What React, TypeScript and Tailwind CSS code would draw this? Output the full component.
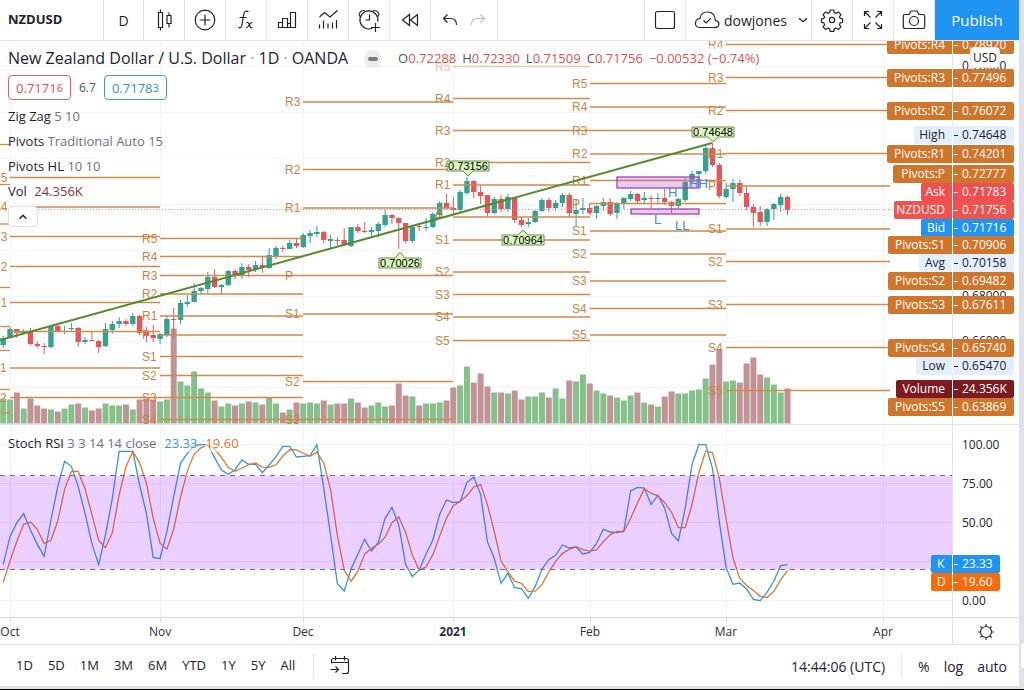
import type { ReactNode } from 'react';

type Candle = [high: number, top: number, bottom: number, low: number, volume: number, up: 0 | 1];

// y positions of wick and body, then volume height
const candles: Candle[] = [
  [336, 338, 345, 348, 25, 1], [327, 329, 338, 338, 24, 1], [329, 329, 333, 338, 31, 0], [329, 331, 333, 334, 15, 1],
  [328, 331, 344, 345, 25, 0], [341, 344, 346, 348, 18, 0], [343, 346, 347, 354, 15, 0], [325, 326, 347, 348, 14, 1],
  [324, 326, 332, 332, 12, 0], [326, 331, 332, 334, 15, 1], [323, 328, 329, 332, 19, 1], [327, 328, 342, 347, 20, 0],
  [337, 340, 342, 344, 16, 1], [331, 340, 341, 341, 13, 0], [340, 341, 347, 353, 15, 0], [323, 329, 346, 347, 20, 1],
  [321, 324, 330, 334, 18, 1], [317, 321, 324, 328, 18, 1], [319, 321, 324, 326, 19, 0], [313, 316, 324, 326, 14, 1],
  [315, 316, 333, 335, 24, 0], [327, 331, 336, 342, 25, 0], [325, 335, 338, 342, 24, 0], [333, 334, 339, 344, 22, 1],
  [315, 319, 335, 337, 24, 1], [308, 319, 320, 337, 95, 0], [300, 303, 320, 324, 42, 1], [295, 302, 304, 307, 38, 1],
  [283, 291, 302, 302, 52, 1], [287, 288, 291, 294, 35, 1], [272, 277, 289, 293, 31, 1], [269, 277, 287, 288, 23, 0],
  [284, 285, 287, 294, 17, 1], [270, 271, 285, 286, 20, 1], [269, 271, 275, 279, 18, 0], [263, 267, 276, 279, 20, 1],
  [264, 267, 270, 277, 22, 0], [261, 265, 269, 272, 21, 1], [257, 265, 267, 273, 19, 0], [248, 255, 268, 269, 26, 1],
  [246, 248, 256, 259, 20, 1], [246, 248, 249, 252, 11, 0], [240, 243, 249, 249, 14, 1], [238, 243, 246, 248, 21, 0],
  [233, 235, 247, 248, 20, 1], [230, 233, 236, 243, 21, 1], [226, 232, 234, 237, 20, 1], [231, 232, 240, 243, 23, 0],
  [235, 239, 241, 248, 19, 1], [237, 240, 241, 245, 20, 0], [228, 240, 245, 246, 20, 0], [227, 227, 246, 247, 25, 1],
  [224, 227, 231, 233, 21, 0], [222, 231, 232, 233, 16, 0], [227, 230, 232, 236, 18, 1], [222, 224, 231, 237, 21, 1],
  [210, 215, 225, 227, 17, 1], [214, 215, 218, 224, 18, 0], [217, 218, 223, 249, 40, 0], [223, 223, 241, 243, 28, 0],
  [227, 227, 241, 243, 27, 1], [223, 226, 227, 231, 18, 0], [218, 227, 228, 231, 20, 1], [212, 214, 227, 228, 20, 1],
  [201, 203, 215, 217, 21, 1], [194, 203, 208, 209, 23, 0], [197, 208, 210, 214, 36, 0], [190, 192, 210, 213, 38, 1],
  [177, 181, 193, 195, 57, 1], [180, 181, 192, 198, 41, 0], [186, 192, 196, 204, 50, 0], [195, 195, 213, 217, 37, 0],
  [197, 199, 213, 214, 31, 1], [195, 199, 209, 212, 31, 0], [194, 197, 209, 212, 30, 1], [197, 198, 220, 223, 33, 0],
  [217, 220, 225, 227, 24, 0], [218, 222, 224, 227, 27, 1], [210, 211, 222, 223, 27, 1], [198, 200, 211, 212, 31, 1],
  [198, 200, 208, 212, 26, 0], [200, 203, 208, 211, 35, 1], [193, 195, 203, 207, 25, 1], [193, 195, 213, 217, 43, 0],
  [200, 210, 214, 226, 42, 1], [198, 208, 210, 214, 49, 1], [203, 208, 213, 215, 40, 0], [205, 206, 213, 219, 33, 1],
  [198, 202, 206, 211, 30, 1], [198, 202, 214, 216, 28, 0], [202, 204, 213, 219, 26, 1], [197, 198, 204, 209, 23, 1],
  [191, 194, 199, 201, 28, 1], [193, 194, 201, 203, 31, 0], [192, 198, 200, 203, 21, 1], [195, 198, 199, 208, 19, 0],
  [193, 198, 199, 203, 17, 1], [189, 198, 202, 205, 27, 0], [201, 202, 206, 213, 32, 0], [198, 199, 206, 208, 30, 1],
  [178, 182, 200, 202, 30, 1], [171, 174, 182, 184, 33, 1], [171, 171, 174, 187, 34, 1], [145, 148, 171, 174, 45, 1],
  [143, 148, 165, 167, 59, 0], [163, 165, 196, 198, 74, 0], [183, 189, 197, 198, 42, 1], [179, 183, 189, 202, 43, 1],
  [180, 183, 193, 196, 41, 0], [187, 193, 207, 210, 60, 0], [204, 207, 213, 227, 66, 0], [206, 212, 222, 226, 49, 0],
  [208, 209, 222, 226, 46, 1], [203, 204, 209, 220, 39, 1], [194, 197, 205, 212, 31, 1], [196, 197, 210, 215, 35, 0],
];

const barX = (i: number) => 3.2 + 6.82 * i;

const months = [
  { label: 'Oct', x: 10 },
  { label: 'Nov', x: 160 },
  { label: 'Dec', x: 303 },
  { label: '2021', x: 453, bold: true },
  { label: 'Feb', x: 590 },
  { label: 'Mar', x: 726 },
  { label: 'Apr', x: 883 },
];

type PivotSet = { from: number; to: number; levels: [string, number][] };

const pivotSets: PivotSet[] = [
  { from: 0, to: 10, levels: [['', 144.5], ['', 184.5], ['', 224], ['', 287.5], ['', 326.5], ['', 350.5], ['', 389.5], ['', 413]] },
  { from: 10, to: 160, levels: [['R5', 177.5], ['R4', 207], ['R3', 236.5], ['R2', 266.5], ['R1', 302.5], ['P', 331.5], ['S1', 368], ['S2', 397.5]] },
  { from: 160, to: 303, levels: [['R5', 238.5], ['R4', 256.5], ['R3', 275.5], ['R2', 294], ['R1', 316], ['P', 335], ['S1', 356.5], ['S2', 375.5], ['S3', 397.5], ['S4', 419.5]] },
  { from: 303, to: 453, levels: [['R3', 102], ['R2', 169.5], ['R1', 208], ['P', 275.5], ['S1', 314], ['S2', 381.5], ['S3', 419.5]] },
  { from: 453, to: 590, levels: [['R5', 66.5], ['R4', 98.5], ['R3', 130.5], ['R2', 162.5], ['R1', 185], ['P', 217], ['S1', 240], ['S2', 272], ['S3', 294.5], ['S4', 317], ['S5', 340.5]] },
  { from: 590, to: 726, levels: [['R5', 83.5], ['R4', 107], ['R3', 130.5], ['R2', 154], ['R1', 180.5], ['P', 203.5], ['S1', 231], ['S2', 254], ['S3', 281], ['S4', 308.5], ['S5', 335]] },
  { from: 726, to: 890, levels: [['R4', 44.5], ['R3', 77.5], ['R2', 110.5], ['R1', 153.5], ['P', 186], ['S1', 229], ['S2', 261.5], ['S3', 304.5], ['S4', 347.5], ['S5', 390.5]] },
];

const ORANGE = '#cf762c';
const PALE = '#e3effd';

const tags = [
  { name: 'Pivots:R4', value: '0.78920', y: 45, x: 887, fill: ORANGE },
  { name: 'Pivots:R3', value: '0.77496', y: 78, x: 887, fill: ORANGE },
  { name: 'Pivots:R2', value: '0.76072', y: 111, x: 887, fill: ORANGE },
  { name: 'High', value: '0.74648', y: 135, x: 914, fill: PALE },
  { name: 'Pivots:R1', value: '0.74201', y: 154, x: 887, fill: ORANGE },
  { name: 'Pivots:P', value: '0.72777', y: 174, x: 893, fill: ORANGE },
  { name: 'Avg', value: '0.70158', y: 263, x: 919, fill: PALE },
  { name: 'Ask', value: '0.71783', y: 192, x: 921, fill: '#f04f52' },
  { name: 'NZDUSD', value: '0.71756', y: 210, x: 894, fill: '#ef5350' },
  { name: 'Bid', value: '0.71716', y: 228, x: 921, fill: '#2094f3' },
  { name: 'Pivots:S1', value: '0.70906', y: 245, x: 888, fill: ORANGE },
  { name: 'Pivots:S2', value: '0.69482', y: 281, x: 888, fill: ORANGE },
  { name: 'Pivots:S3', value: '0.67611', y: 305, x: 888, fill: ORANGE },
  { name: 'Pivots:S4', value: '0.65740', y: 348, x: 888, fill: ORANGE },
  { name: 'Low', value: '0.65470', y: 366, x: 916, fill: PALE },
  { name: 'Volume', value: '24.356K', y: 389, x: 896, fill: '#7d1a20' },
  { name: 'Pivots:S5', value: '0.63869', y: 407, x: 888, fill: ORANGE },
];

const callouts = [
  { text: '0.73156', x: 468, y: 166, tip: 176 },
  { text: '0.70026', x: 400, y: 263, tip: 252 },
  { text: '0.70964', x: 523, y: 240, tip: 230 },
  { text: '0.74648', x: 713, y: 132, tip: 142 },
];

// %K in thirds of a pixel below the pane top, two warm-up values first
const kRaw = [
  530, 471, 418, 335, 293, 266, 315, 358, 394, 285, 185, 109, 124, 185, 265, 355, 419, 330, 220, 79, 79, 79, 180, 265,
  397, 401, 320, 215, 115, 85, 62, 59, 59, 98, 135, 148, 134, 105, 118, 118, 143, 120, 95, 64, 64, 96, 94, 92, 59, 190,
  330, 476, 498, 432, 388, 343, 378, 352, 280, 247, 300, 418, 455, 435, 387, 345, 268, 225, 233, 230, 172, 156, 208,
  350, 400, 475, 445, 488, 491, 520, 485, 432, 404, 391, 360, 369, 366, 387, 382, 355, 313, 321, 323, 318, 198, 187,
  189, 238, 211, 250, 325, 348, 250, 118, 59, 59, 130, 290, 428, 478, 474, 492, 523, 527, 502, 468, 422, 419,
];
const kLine = kRaw.slice(2).map((v, i) => `${barX(i)},${425 + v / 3}`).join(' ');
const dLine = kRaw
  .slice(2)
  .map((v, i) => `${barX(i)},${425 + (v + kRaw[i] + kRaw[i + 1]) / 9}`)
  .join(' ');

const ranges = ['1D', '5D', '1M', '3M', '6M', 'YTD', '1Y', '5Y', 'All'];

function Icon({ children, size = 28, className = '' }: { children: ReactNode; size?: number; className?: string }) {
  return (
    <svg
      width={size}
      height={size}
      viewBox="0 0 28 28"
      fill="none"
      stroke="currentColor"
      strokeWidth="1.2"
      className={className}
      aria-hidden="true"
    >
      {children}
    </svg>
  );
}

function Tool({ label, children, className = 'w-[41px]' }: { label: string; children: ReactNode; className?: string }) {
  return (
    <button aria-label={label} className={`flex h-full shrink-0 items-center justify-center border-r border-[#e0e3eb] ${className}`}>
      {children}
    </button>
  );
}

function Header() {
  return (
    <header className="flex h-[41px] items-stretch border-b border-[#e0e3eb]">
      <button className="w-[104px] shrink-0 border-r border-[#e0e3eb] pl-2 text-left text-[13px] font-bold">NZDUSD</button>
      <Tool label="Interval" className="w-[40px]">
        <span className="text-[14px] font-medium">D</span>
      </Tool>
      <Tool label="Chart type">
        <Icon>
          <path d="M8.5 6.5h4v15h-4zM10.5 3.5v3M10.5 21.5v3M17 9.5h4v8h-4zM19 6.5v3M19 17.5v4" />
        </Icon>
      </Tool>
      <Tool label="Compare">
        <Icon>
          <circle cx="14" cy="14" r="9.8" />
          <path d="M14 8.7v10.6M8.7 14h10.6" />
        </Icon>
      </Tool>
      <Tool label="Indicators">
        <Icon>
          <path d="M16.500 5.700c-2-1.300-4.200-.7-4.700 2.300l-1.900 11c-.4 2.700-1.900 3.400-3.600 2.300M7.500 11.500h7" />
          <path d="M14.500 16.500c1.500-.5 2 .3 2.500 1.500l1 2.500c.5 1.300 1.200 1.700 2.500 1M20.500 16.500c-1.300-.2-2 .5-3 2l-1 1.500c-.7 1.200-1.300 1.700-2.500 1.500" />
        </Icon>
      </Tool>
      <Tool label="Financials">
        <Icon>
          <path d="M5.500 16.500h4v5h-4zM9.500 12.500h5v9h-5zM17.500 6.500h5v15h-5zM14.500 21.500h3M14.500 17.500h3" />
        </Icon>
      </Tool>
      <Tool label="Templates">
        <Icon>
          <path d="M5.500 11l5-4.500 5.500 4.500 7.500-6.500M5.500 18.500v4M9.500 14.500v8M14 17.500v5M18.500 16.500v6M22.500 14v8.500" />
        </Icon>
      </Tool>
      <Tool label="Alert">
        <Icon>
          <path d="M17.500 22.200A9 9 0 1 1 22.800 15.500M14.500 8.500v5.500h-4M20.500 17v9M16 21.500h9" />
          <path d="M4.500 10.500c-1.500-3 1.500-7 5.500-5.700M23.500 10.500c1.500-3-1.500-7-5.500-5.700" />
        </Icon>
      </Tool>
      <Tool label="Replay">
        <Icon>
          <path d="M13.500 8.500v11L6.500 14zM21.500 8.500v11L14.500 14z" />
        </Icon>
      </Tool>
      <div className="flex w-[67px] shrink-0 items-center justify-center border-r border-[#e0e3eb]">
        <button aria-label="Undo">
          <Icon>
            <path d="M11.500 8.500L7.500 12.500l4 4M7.500 12.500h7c4 0 6 2 6 6.500" />
          </Icon>
        </button>
        <button aria-label="Redo" className="text-[#b8bbc4]">
          <Icon>
            <path d="M16.500 8.500l4 4-4 4M20.500 12.500h-7c-4 0-6 2-6 6.500" />
          </Icon>
        </button>
      </div>
      <div className="flex-1 border-r border-[#e0e3eb]" />
      <Tool label="Layout">
        <Icon>
          <rect x="4.500" y="5.500" width="19" height="17" rx="2" />
        </Icon>
      </Tool>
      <button className="flex w-[126px] shrink-0 items-center border-r border-[#e0e3eb] pl-[6px]">
        <Icon className="mr-1">
          <path d="M7.500 21.500h15c5.500 0 6-6 .8-7.200C23 8.500 19.500 6 15.500 6c-4 0-7 2.500-7.500 6.500-6 .8-6 8.500-.5 9zM11.500 14.500l2.700 2.500 4.500-4.700" />
        </Icon>
        <span className="text-[14px] font-medium">dowjones</span>
        <Icon size={16} className="ml-2">
          <path d="M7 11l7 6 7-6" strokeWidth="2.200" />
        </Icon>
      </button>
      <Tool label="Settings">
        <Icon>
          <circle cx="14" cy="14" r="2.600" />
          <path d="M12.200 4h3.600l.6 2.600 1.600.7 2.300-1.400 2.600 2.600-1.400 2.300.7 1.600 2.400.6v3.300l-2.500.7-.7 1.600 1.500 2.400-2.600 2.500-2.300-1.400-1.600.7-.6 2.500h-3.600l-.6-2.500-1.600-.7-2.300 1.400-2.600-2.500 1.500-2.400-.7-1.600L3.500 16.300V13l2.400-.6.7-1.600-1.500-2.300 2.600-2.600L10 7.300l1.600-.7z" />
        </Icon>
      </Tool>
      <Tool label="Fullscreen">
        <Icon>
          <path d="M5.500 10V5.500H10M5.500 5.500l6 6M18 5.500h4.500V10M22.500 5.500l-6 6M5.500 18v4.500H10M5.500 22.500l6-6M22.500 18v4.500H18M22.500 22.500l-6-6" />
        </Icon>
      </Tool>
      <Tool label="Snapshot">
        <Icon>
          <path d="M5 8.500h4l2-3.500h6l2 3.500h4c1 0 1.700.7 1.700 1.700v10.600c0 1-.7 1.700-1.700 1.700H5c-1 0-1.700-.7-1.700-1.700V10.200c0-1 .7-1.700 1.700-1.700z" />
          <circle cx="14" cy="15" r="4.500" />
        </Icon>
      </Tool>
      <button className="w-[84px] shrink-0 bg-[#2094f3] text-[15px] text-white">Publish</button>
    </header>
  );
}

function Legend() {
  return (
    <div className="absolute left-2 top-[5px] text-[13px] leading-[25px]">
      <div className="flex items-center">
        <h1 className="text-[16px] font-medium">
          New Zealand Dollar / U.S. Dollar <span className="text-gray-400">·</span> 1D <span className="text-gray-400">·</span> OANDA
        </h1>
        <span className="ml-4 flex size-[18px] items-center justify-center rounded-full bg-[#ececf0]">
          <span className="h-1 w-2.5 rounded-full bg-[#787b86]" />
        </span>
        <p className="ml-4 flex gap-[6px] bg-white/50 text-[#d9534f]">
          <span><span className="text-gray-600">O</span>0.72288</span>
          <span><span className="text-gray-600">H</span>0.72330</span>
          <span><span className="text-gray-600">L</span>0.71509</span>
          <span><span className="text-gray-600">C</span>0.71756</span>
          <span>−0.00532 (−0.74%)</span>
        </p>
      </div>
      <div className="my-1 flex items-center gap-2">
        <button className="h-[25px] w-[63px] rounded border border-[#e0605e] bg-white leading-[23px] text-[#d9534f]">
          0.7171<span className="align-[1px] text-[11px]">6</span>
        </button>
        <span className="text-[12px] text-gray-600">6.7</span>
        <button className="h-[25px] w-[63px] rounded border border-[#3d9ad9] bg-white leading-[23px] text-[#2f8fd0]">
          0.7178<span className="align-[1px] text-[11px]">3</span>
        </button>
      </div>
      <p>Zig Zag <span className="text-gray-500">5 10</span></p>
      <p>Pivots <span className="text-gray-500">Traditional Auto 15</span></p>
      <p>Pivots HL <span className="text-gray-500">10 10</span></p>
      <p>Vol <span className="ml-1 text-[#8c2f36]">24.356K</span></p>
      <button aria-label="Collapse" className="mt-0.5 flex h-[21px] w-[30px] items-center justify-center rounded border border-[#dcdfe6] bg-white">
        <Icon size={16}>
          <path d="M8 17l6-6 6 6" strokeWidth="2.500" />
        </Icon>
      </button>
    </div>
  );
}

function AxisTag({ name, value, y, x, fill }: (typeof tags)[number]) {
  return (
    <g fill={fill === PALE ? '#1e222d' : '#fff'}>
      <rect x={x} y={y - 9} width={1014 - x} height="18" rx="2" fill={fill} />
      <path d={`M952.500 ${y - 9}v18`} stroke="#fff" />
      <path d={`M954 ${y + 0.5}h4`} stroke={fill === PALE ? '#1e222d' : '#fff'} />
      <text x="945" y={y + 4} textAnchor="end">{name}</text>
      <text x="962" y={y + 4}>{value}</text>
    </g>
  );
}

function PriceChart() {
  return (
    <svg viewBox="0 41 1019 384" className="block w-full text-[12px] font-medium" role="img" aria-label="NZDUSD daily candles">
      <g stroke="#f3f4f7">
        {[66, 112, 158, 204, 250, 296, 341, 387].map(y => (
          <path key={y} d={`M0 ${y + 0.5}H952`} />
        ))}
        {months.map(m => (
          <path key={m.x} d={`M${m.x + 0.5} 41V425`} />
        ))}
      </g>

      {/* Volume */}
      {candles.map(([, , , , v, up], i) => (
        <rect key={i} x={barX(i) - 3} y={423.5 - v} width="6" height={v} fill={up ? '#86c08a' : '#c09396'} />
      ))}

      {/* Candles */}
      {candles.map(([hi, top, bottom, lo, , up], i) => (
        <g key={i} fill={up ? '#35a093' : '#e2575a'}>
          <rect x={barX(i) - 0.5} y={hi} width="1" height={lo - hi} />
          <rect x={barX(i) - 2.7} y={top} width="5.4" height={Math.max(bottom - top, 1)} />
        </g>
      ))}

      {/* Pivot levels */}
      {pivotSets.map(set => (
        <g key={set.from} fill="#cb8244" fontFamily="Liberation Sans, sans-serif">
          {set.levels.map(([label, y], i) => (
            <g key={i}>
              <path d={`M${set.from} ${y}H${set.to}`} stroke="#cf8a4e" strokeWidth="1.300" />
              <text x={set.from - 18} y={y + 4}>{label}</text>
            </g>
          ))}
        </g>
      ))}

      <path d="M0 209.500H894" stroke="#dd8a86" strokeDasharray="1 2" />

      {/* High / low zones */}
      <g fill="#ba68c8" fillOpacity="0.350" stroke="#a044b4" strokeWidth="1.300">
        <rect x="617" y="177" width="82" height="11" />
        <rect x="631" y="209" width="68" height="5" />
      </g>
      <g fill="#3b8fdc" fontFamily="Liberation Sans, sans-serif" className="text-[13px]">
        <text x="668" y="197">H</text>
        <text x="689" y="188">HH</text>
        <text x="654" y="224">L</text>
        <text x="675" y="230">LL</text>
      </g>

      <path d="M0 340L712 143" stroke="#558b2f" strokeWidth="2" />

      {/* Zig zag callouts */}
      {callouts.map(({ text, x, y, tip }) => {
        const edge = tip > y ? y + 5 : y - 5;
        const far = tip > y ? y - 5 : y + 5;
        return (
          <g key={text}>
            <path
              d={`M${x - 21} ${far}H${x + 21}V${edge}H${x + 5}L${x} ${tip}L${x - 5} ${edge}H${x - 21}Z`}
              fill="#dcf5c0"
              stroke="#629440"
            />
            <text x={x} y={y + 4} textAnchor="middle" fontFamily="Liberation Sans, sans-serif" className="text-[11px]">
              {text}
            </text>
          </g>
        );
      })}

      {/* Price axis */}
      <path d="M952.500 41V425" stroke="#e0e3eb" />
      <g fill="#1e222d">
        <text x="962" y="70">0.78000</text>
        <text x="962" y="162">0.74000</text>
        <text x="962" y="300">0.68000</text>
        <text x="962" y="345">0.66000</text>
      </g>
      {tags.map(tag => (
        <AxisTag key={tag.name} {...tag} />
      ))}
      <path d="M0 424.500H1019" stroke="#e0e3eb" />
    </svg>
  );
}

function StochChart() {
  return (
    <svg viewBox="0 425 1019 192" className="block w-full text-[12px] font-medium" role="img" aria-label="Stochastic RSI">
      <g stroke="#f0f1f5">
        {[444, 483, 522, 561, 600].map(y => (
          <path key={y} d={`M0 ${y + 0.5}H952`} />
        ))}
        {months.map(m => (
          <path key={m.x} d={`M${m.x + 0.5} 425V617`} />
        ))}
      </g>
      <g fill="none" strokeWidth="1.300">
        <polyline points={kLine} stroke="#3596d6" />
        <polyline points={dLine} stroke="#e0762c" />
      </g>
      <rect y="476" width="952" height="93" fill="#9915ff" fillOpacity="0.200" />
      <path d="M0 475.500H952M0 569.500H952" stroke="#74677f" strokeDasharray="5 5" />
      <path d="M952.500 425V617" stroke="#e0e3eb" />
      <g fill="#1e222d">
        <text x="962" y="449">100.00</text>
        <text x="962" y="488">75.00</text>
        <text x="962" y="527">50.00</text>
        <text x="962" y="605">0.00</text>
      </g>
      <g fill="#fff">
        <rect x="931" y="555" width="69" height="18" rx="2" fill="#2094f3" />
        <rect x="931" y="573" width="69" height="18" rx="2" fill="#f76b0c" />
        <path d="M952.500 555v36M954 564.500h4M954 582.500h4" stroke="#fff" />
        <text x="937" y="568">K</text>
        <text x="962" y="568">23.33</text>
        <text x="937" y="586">D</text>
        <text x="962" y="586">19.60</text>
      </g>
    </svg>
  );
}

function TimeAxis() {
  return (
    <svg viewBox="0 617 1019 28" className="block w-full text-[12px]" role="img" aria-label="Time axis">
      <path d="M0 617.500H1019" stroke="#d5d8e0" />
      {months.map(m => (
        <g key={m.x}>
          <path d={`M${m.x + 0.5} 617v5`} stroke="#d5d8e0" />
          <text x={m.x} y="636" textAnchor="middle" fill="#2a2e39" fontWeight={m.bold ? 700 : 400}>
            {m.label}
          </text>
        </g>
      ))}
      <path d="M952.500 617V645M0 644.500H1019" stroke="#e0e3eb" />
      <g fill="none" stroke="#2a2e39" strokeWidth="1.200">
        <circle cx="986" cy="632" r="5.500" />
        <path d="M986 624v2.500M986 637.500v2.500M978 632h2.500M991.500 632h2.500M980.300 626.300l1.800 1.800M989.900 635.900l1.800 1.800M980.300 637.700l1.800-1.800M989.900 628.100l1.800-1.800" />
      </g>
    </svg>
  );
}

export default function App() {
  return (
    <div className="relative flex min-h-screen flex-col bg-[#dfe1ea] font-['Open_Sans',sans-serif] text-[#1e222d]">
      <div className="mr-[5px] bg-white">
        <Header />
        <main>
          <section className="relative">
            <PriceChart />
            <Legend />
            <button className="absolute right-[19px] top-[6px] h-[21px] w-[30px] rounded border border-[#e0e3eb] bg-white text-[12px]">
              USD
            </button>
          </section>
          <section className="relative">
            <StochChart />
            <p className="absolute left-2 top-[9px] text-[13px] leading-[18px]">
              Stoch RSI <span className="text-gray-500">3 3 14 14 close</span>
              <span className="ml-2 bg-white/50 text-[#3596d6]">23.33</span>
              <span className="ml-2 bg-white/50 text-[#e0762c]">19.60</span>
            </p>
          </section>
          <TimeAxis />
        </main>
        <footer className="flex h-[41px] items-center pt-px text-[13px]">
          <div className="flex gap-[15px] pl-4">
            {ranges.map(range => (
              <button key={range}>{range}</button>
            ))}
          </div>
          <span className="ml-[18px] h-6 w-px bg-[#e0e3eb]" />
          <button aria-label="Go to date" className="ml-3">
            <Icon>
              <path d="M5.500 11.500v-3c0-1.200.8-2 2-2h13c1.200 0 2 .8 2 2v11c0 1.200-.8 2-2 2H16M5.500 10.500h17M9.500 4v4.500M18.500 4v4.500M4.500 17.500h8M9.500 14.500l3 3-3 3" />
            </Icon>
          </button>
          <div className="ml-auto flex items-center text-[14px]">
            <button>14:44:06 (UTC)</button>
            <span className="mx-4 h-6 w-px bg-[#e0e3eb]" />
            <div className="flex gap-[14px] pr-3">
              <button>%</button>
              <button>log</button>
              <button>auto</button>
            </div>
          </div>
        </footer>
      </div>
      <button aria-label="Open panel" className="absolute bottom-[22px] right-0 h-[25px] w-[3px] rounded-l bg-white" />
      <div className="mt-auto h-px bg-black" />
    </div>
  );
}
